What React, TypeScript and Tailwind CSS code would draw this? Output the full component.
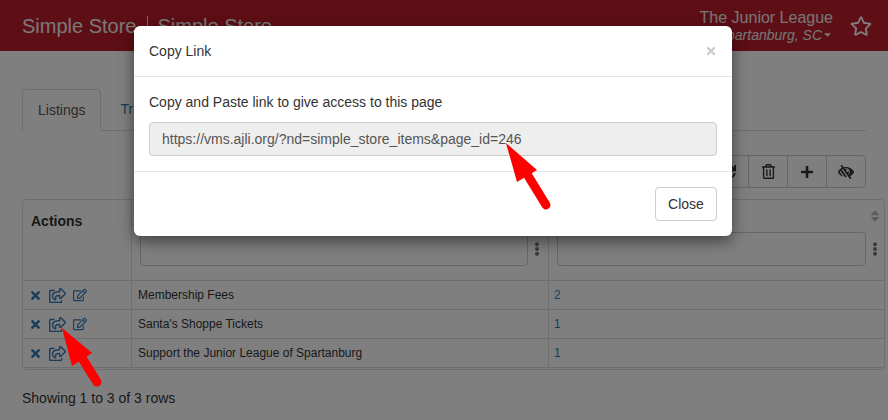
import React from 'react';
import { FaTimes, FaRegShareSquare, FaRegEdit, FaSync, FaRegTrashAlt, FaPlus, FaLowVision, FaRegStar, FaEllipsisV, FaSort, FaCaretDown } from 'react-icons/fa';

const rows = [
  { name: 'Membership Fees', count: 2, edit: true },
  { name: "Santa's Shoppe Tickets", count: 1, edit: true },
  { name: 'Support the Junior League of Spartanburg', count: 1, edit: false }
];

const toolButtons = [
  <FaSync size={14} />,
  <FaRegTrashAlt size={15} />,
  <FaPlus size={14} />,
  <FaLowVision size={16} />
];

export default function App() {
  return <div className="relative h-[420px] w-[888px] overflow-hidden bg-white font-['Liberation_Sans',Arial,sans-serif] text-sm text-[#333]">
      {/* Navbar */}
      <div className="flex h-[51px] items-center justify-between bg-[#bd1c2b] pl-[22px] pr-4 text-white">
        <div className="flex items-center text-xl text-[#f2f2f2]">
          <span>Simple Store</span>
          <span className="mx-[10px] h-5 w-px bg-[#ddd]" />
          <span>Simple Store</span>
        </div>
        <div className="flex items-center gap-[17px]">
          <div className="flex flex-col items-end leading-none">
            <span className="text-base leading-[18px] text-[#eee]">The Junior League</span>
            <span className="flex items-center text-sm italic leading-4 text-[#eee]">
              Spartanburg, SC<FaCaretDown size={11} />
            </span>
          </div>
          <FaRegStar size={22} />
        </div>
      </div>

      <div className="px-[22px] pt-[38px]">
        {/* Tabs */}
        <div className="flex h-[42px] border-b border-[#ddd]">
          <div className="h-[42px] rounded-t border border-b-white border-[#ddd] bg-white px-[15px] py-[10px] text-[#555]">Listings</div>
          <div className="px-[19px] py-[10px] text-[#337ab7]">Transactions</div>
        </div>

        {/* Toolbar */}
        <div className="mt-6 flex justify-end">
          <div className="flex h-[33px] rounded border border-[#ccc]">
            {toolButtons.map((icon, i) => <div key={i} className={`flex w-[39px] items-center justify-center ${i > 0 ? 'border-l border-[#ccc]' : ''}`}>
                {icon}
              </div>)}
          </div>
        </div>

        {/* Table */}
        <div className="mt-[11px] h-[171px] w-[863px] rounded border border-[#ddd]">
          <div className="flex h-[81px] border-b border-[#ddd]">
            <div className="w-[109px] shrink-0 border-r border-[#ddd] pl-2 pt-[11px] font-bold">Actions</div>
            <div className="w-[417px] shrink-0 border-r border-[#ddd] pl-2 pr-1 pt-[32px]">
              <div className="flex items-center gap-[2px]">
                <div className="h-[34px] w-[389px] rounded border border-[#ccc]" />
                <FaEllipsisV size={14} className="text-[#777]" />
              </div>
            </div>
            <div className="relative flex-1 pl-2 pt-[32px]">
              <FaSort size={14} className="absolute right-[2px] top-[9px] text-[#bbb]" />
              <div className="flex items-center gap-[2px]">
                <div className="h-[34px] w-[309px] rounded border border-[#ccc]" />
                <FaEllipsisV size={14} className="text-[#777]" />
              </div>
            </div>
          </div>
          {rows.map(row => <div key={row.name} className="flex h-[29px] border-b border-[#ddd] text-xs">
              <div className="flex w-[109px] shrink-0 items-center border-r border-[#ddd] pl-[6px] text-[#337ab7]">
                <FaTimes size={13} />
                <FaRegShareSquare size={17} className="ml-[7px]" />
                {row.edit && <FaRegEdit size={14} className="ml-[7px]" />}
              </div>
              <div className="flex w-[417px] shrink-0 items-center border-r border-[#ddd] pl-[6px]">{row.name}</div>
              <div className="flex flex-1 items-center pl-[5px] text-[#337ab7]">{row.count}</div>
            </div>)}
        </div>

        <div className="mt-[18px] text-sm leading-5">Showing 1 to 3 of 3 rows</div>
      </div>

      {/* Backdrop */}
      <div className="absolute inset-0 bg-black/50" />

      {/* Modal */}
      <div className="absolute left-[134px] top-[26px] h-[210px] w-[598px] rounded-md bg-white shadow-[0_5px_15px_rgba(0,0,0,0.5)]">
        <div className="flex h-[51px] items-center justify-between border-b border-[#e5e5e5] pl-[15px] pr-[15px]">
          <span className="leading-5">Copy Link</span>
          <FaTimes size={12} className="text-[#ccc]" />
        </div>
        <div className="h-[95px] border-b border-[#e5e5e5] px-[15px] pt-[15px]">
          <div className="leading-5">Copy and Paste link to give access to this page</div>
          <div className="mt-[10px] flex h-[34px] items-center rounded border border-[#ccc] bg-[#eee] px-3 text-[#555]">
            https://vms.ajli.org/?nd=simple_store_items&amp;page_id=246
          </div>
        </div>
        <div className="flex justify-end px-[15px] pt-[15px]">
          <div className="flex h-[34px] w-[62px] items-center justify-center rounded border border-[#ccc] bg-white">Close</div>
        </div>
      </div>

      {/* Red annotation arrows */}
      <svg className="absolute left-0 top-0" width="888" height="420" viewBox="0 0 888 420">
        <polygon points="506,143 537,170 517,182" fill="#ff0000" />
        <line x1="527" y1="174" x2="546" y2="205" stroke="#ff0000" strokeWidth="9" strokeLinecap="round" />
        <polygon points="62,328 92,353 72,366" fill="#ff0000" />
        <line x1="82" y1="358" x2="97" y2="382" stroke="#ff0000" strokeWidth="9" strokeLinecap="round" />
      </svg>
    </div>;
}
